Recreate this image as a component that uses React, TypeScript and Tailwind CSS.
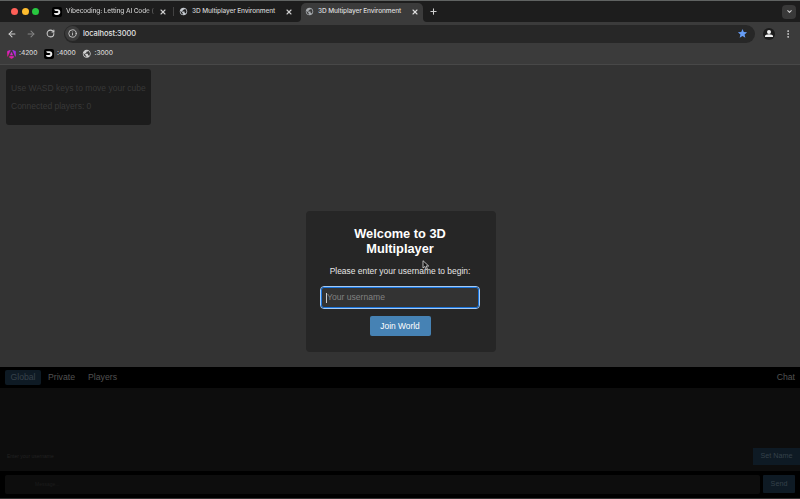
import React from "react";
import { ArrowLeft, ArrowRight, RotateCw, X, Plus, ChevronDown, Info, EllipsisVertical } from "lucide-react";
import { MdPublic, MdStar } from "react-icons/md";

function DevLogo() {
  return (
    <svg viewBox="0 0 10 10" className="size-[10px] shrink-0">
      <rect width="10" height="10" rx="2" fill="#000" />
      <path d="M2.2 2.2H5.4Q8.3 2.5 8.3 5Q8.3 7.7 5.4 7.9H4Q2.2 7.7 1.9 5.9H5.2Q6.4 5.8 6.4 5Q6.4 4.1 5.2 4H3.7Q2.5 3.7 2.2 2.2Z" fill="#eee" />
    </svg>
  );
}

function AngularLogo() {
  return (
    <svg viewBox="0 0 10 10" className="size-[9px] shrink-0">
      <path d="M6.2 0 9.8 1.6 9.3 7.2ZM7.5 8 5 9.6 2.5 8 3 6.9H7ZM3.7 5.5 5 2.4 6.3 5.5ZM.7 7.2.2 1.6 3.8 0Z" fill="url(#angular)" stroke="url(#angular)" strokeWidth=".5" />
      <defs>
        <linearGradient id="angular" x1="0" y1="1" x2="1" y2="0">
          <stop stopColor="#f01565" />
          <stop offset=".5" stopColor="#d923c8" />
          <stop offset="1" stopColor="#8b2cf5" />
        </linearGradient>
      </defs>
    </svg>
  );
}

function TabBar() {
  return (
    <div className="flex h-[22px] items-center border-t border-[#606362] bg-[#1d1d1d] text-[6.5px] font-medium tracking-[-0.11px] text-[#d0d0d0]">
      <div className="ml-[11px] flex w-7 shrink-0 justify-between">
        <i className="size-[7px] rounded-full bg-[#ff5f57]" />
        <i className="size-[7px] rounded-full bg-[#febc2e]" />
        <i className="size-[7px] rounded-full bg-[#28c840]" />
      </div>
      <div className="ml-[13px] flex w-[121px] shrink-0 items-center">
        <DevLogo />
        <span className="ml-[4px] w-[92px] bg-linear-to-r from-[#d8d8d8] from-85% to-transparent bg-clip-text whitespace-nowrap text-transparent">Vibecoding: Letting AI Code (</span>
        <X className="ml-px size-2 shrink-0" strokeWidth={3.2} />
      </div>
      <div className="h-[9px] w-px bg-[#424242]" />
      <div className="ml-[5px] flex w-[122px] shrink-0 items-center">
        <MdPublic className="size-[9px] text-[#c5cad0]" />
        <span className="ml-[4px] w-[93px] whitespace-nowrap">3D Multiplayer Environment</span>
        <X className="size-2 shrink-0" strokeWidth={3.2} />
      </div>
      <div className="relative flex h-[19px] w-[122px] shrink-0 items-center self-end rounded-t-[5px] bg-[#3b3b3b] pb-[2px] pl-[4px] text-[#dedede]">
        <svg viewBox="0 0 130 4" className="absolute bottom-0 -left-1 h-1 w-[130px]" fill="#3b3b3b">
          <path d="M0 4Q4 4 4 0V4ZM126 0Q126 4 130 4H126Z" />
        </svg>
        <MdPublic className="size-[9px] text-[#a7abaf]" />
        <span className="ml-[4px] w-[93px] whitespace-nowrap">3D Multiplayer Environment</span>
        <X className="size-2 shrink-0" strokeWidth={3.2} />
      </div>
      <Plus className="ml-[6px] size-[9px]" strokeWidth={2.8} />
      <div className="mr-1 ml-auto flex size-[14px] items-center justify-center rounded-[4px] bg-[#393939]">
        <ChevronDown className="size-[7px]" strokeWidth={3.5} />
      </div>
    </div>
  );
}

function Toolbar() {
  return (
    <div className="h-[43px] border-b border-[#484848] bg-[#3b3b3b] text-[#d0d0d0]">
      <div className="flex h-[22px] items-center pt-[1px] pl-[7px]">
        <ArrowLeft className="size-[10px]" strokeWidth={2.5} />
        <ArrowRight className="ml-[9px] size-[10px] text-[#858585]" strokeWidth={2.5} />
        <RotateCw className="ml-[10px] size-[9px]" strokeWidth={2.7} />
        <div className="ml-[9px] flex h-[18px] w-[691px] items-center rounded-full bg-[#272727] pl-[1px]">
          <div className="flex size-[15px] items-center justify-center rounded-full bg-[#3c3c3c]">
            <Info className="size-[9px]" strokeWidth={2.3} />
          </div>
          <span className="ml-[3px] text-[7.5px] font-medium tracking-[-0.08px] text-[#e3e3e3]">localhost:3000</span>
          <MdStar className="mr-[7px] ml-auto size-[11px] text-[#669df6]" />
        </div>
        <svg viewBox="0 0 12 12" className="ml-2 size-3">
          <circle cx="6" cy="6" r="6" fill="#1c1c1c" />
          <circle cx="6" cy="4" r="2" fill="#f1f1f1" />
          <path d="M2 9V7.9Q2.4 6.2 6 6.2T10 7.9V9Z" fill="#f1f1f1" />
        </svg>
        <EllipsisVertical className="ml-[8px] size-[10px]" strokeWidth={2.3} />
      </div>
      <div className="flex h-5 items-center pl-[7px] text-[6.6px] font-medium tracking-[-0.1px]">
        <AngularLogo />
        <span className="ml-[3px] w-[25px]">:4200</span>
        <DevLogo />
        <span className="ml-[3px] w-[25px]">:4000</span>
        <MdPublic className="size-[9.5px] text-[#d0d0d0]" />
        <span className="ml-[3px]">:3000</span>
      </div>
    </div>
  );
}

function WelcomeDialog() {
  return (
    <div className="absolute top-[146px] left-[306px] flex h-[141px] w-[190px] flex-col items-center rounded-[4px] bg-[#262626] pr-[2px] text-white">
      <h1 className="mt-[16px] text-center text-[12.8px] leading-[14.5px] font-bold">
        Welcome to 3D
        <br />
        Multiplayer
      </h1>
      <p className="mt-[9px] text-[8.45px] leading-[12px] whitespace-nowrap text-[#e5e5e5]">Please enter your username to begin:</p>
      <div className="mt-[9px] h-[23px] w-[160px] rounded-[4px] border border-[#a5caf3]">
        <div className="flex h-full w-full items-center rounded-[3px] border border-[#1a74dc] bg-[#333] pl-[4px] text-[8.6px] text-[#818181]">
          <i className="h-[10px] w-px bg-[#ccc]" />
          <span>Your username</span>
        </div>
      </div>
      <button className="mt-[7px] h-5 w-[61px] rounded-[2px] bg-[#4682b4] text-[8.4px] text-white">Join World</button>
      <svg viewBox="0 0 8 10" className="absolute top-[49px] left-[116px] h-[10px] w-[8px]">
        <path d="M1 .7V8L2.8 6.5 4.1 9.3 5.4 8.7 4.1 6H6.7Z" fill="#171717" stroke="#ddd" strokeWidth=".8" />
      </svg>
    </div>
  );
}

function ChatPanel() {
  return (
    <div className="flex h-[131px] flex-col bg-black text-[#525252]">
      <div className="flex h-[21px] items-center pr-[5px] pl-[5px] text-[8.7px]">
        <div className="flex h-[15px] w-[36px] items-center justify-center rounded-[2px] bg-[#0e1a24] text-[#37414a]">Global</div>
        <span className="ml-[7px]">Private</span>
        <span className="ml-[13px]">Players</span>
        <span className="ml-auto">Chat</span>
      </div>
      <div className="flex h-[83px] items-end bg-[#0d0d0d] pb-[6px]">
        <span className="mb-[5px] ml-[7px] text-[5px] leading-[8px] text-[#222]">Enter your username</span>
        <div className="ml-auto flex h-[17px] w-[47px] items-center justify-center bg-[#0e1a24] text-[7.2px] text-[#35414a]">Set Name</div>
      </div>
      <div className="flex h-[27px] items-start gap-[3px] pt-[4px] pl-[5px]">
        <div className="flex h-[19px] w-[755px] items-center rounded-[2px] bg-[#0d0d0d] pl-[30px] text-[5px] text-[#1c1c1c]">Message...</div>
        <div className="flex h-[18px] w-[32px] items-center justify-center rounded-[1px] bg-[#0e1a24] text-[7.2px] text-[#35414a]">Send</div>
      </div>
    </div>
  );
}

export default function App() {
  return (
    <div className="h-[499px] w-[800px] overflow-hidden bg-[#333] font-['Inter',sans-serif]">
      <TabBar />
      <Toolbar />
      <div className="font-['Liberation_Sans',Arial,sans-serif]">
        <main className="relative h-[302px] bg-[#333] pt-[4px] pl-[6px]">
          <div className="h-[56px] w-[145px] rounded-[3px] bg-[#1c1c1c] pt-[13px] pl-[5px] text-[8.5px] leading-[12px] text-[#383838]">
            <p className="whitespace-nowrap">Use WASD keys to move your cube</p>
            <p className="mt-[6px]">Connected players: 0</p>
          </div>
          <WelcomeDialog />
        </main>
        <ChatPanel />
      </div>
    </div>
  );
}
